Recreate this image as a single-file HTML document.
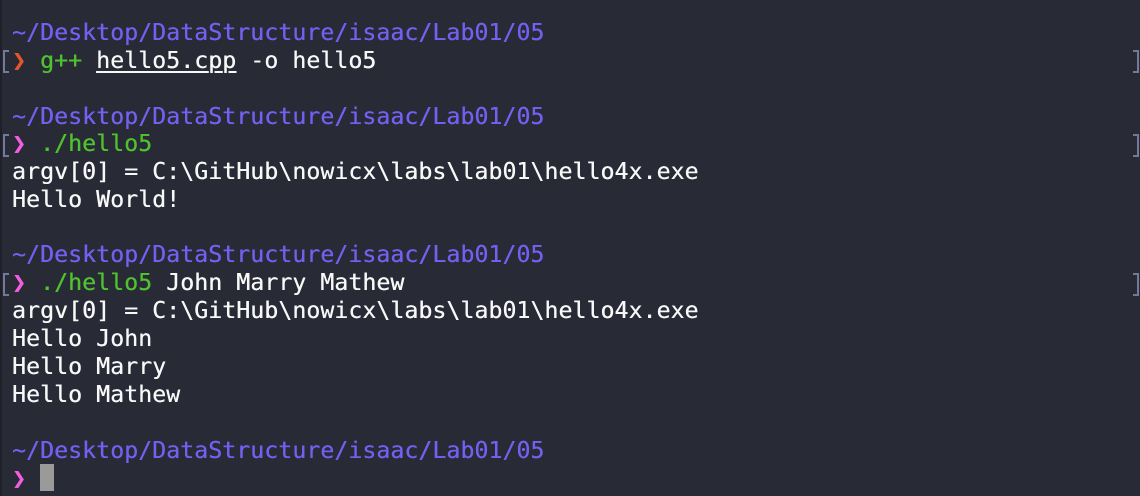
<!DOCTYPE html>
<html><head><meta charset="utf-8"><style>
html,body{margin:0;padding:0}
body{width:1140px;height:496px;background:#282a36;position:relative;overflow:hidden;font-family:"DejaVu Sans Mono","Liberation Mono",monospace;font-size:23.2px;letter-spacing:0.05px;color:#f8f8f8}
.l{position:absolute;left:12px;height:28px;line-height:28px;white-space:pre;text-shadow:0.3px 0 0 currentColor}
.p{color:#7360f0}
.g{color:#4fc22f}
.r{color:#e5562c}
.k{color:#f35ee0}
.u{text-decoration:underline;text-decoration-thickness:2px;text-underline-offset:3px}
.bl,.br{position:absolute;width:4px;height:19px;border:2px solid #717a9a}
.bl{left:3px;border-right:none}
.br{left:1133px;border-left:none}
.cur{position:absolute;left:40px;top:464px;width:14px;height:27px;background:#9a9a9a}
.edge{position:absolute;left:0;top:0;width:2px;height:496px;background:#1f2029}
</style></head><body>
<div class="edge"></div>
<div class="l p" style="top:19px">~/Desktop/DataStructure/isaac/Lab01/05</div>
<div class="l" style="top:47px"><span class="r">❯</span> <span class="g">g++</span> <span class="u">hello5.cpp</span> -o hello5</div>
<div class="bl" style="top:50px"></div><div class="br" style="top:50px"></div>
<div class="l p" style="top:103px">~/Desktop/DataStructure/isaac/Lab01/05</div>
<div class="l" style="top:130px"><span class="k">❯</span> <span class="g">./hello5</span></div>
<div class="bl" style="top:134px"></div><div class="br" style="top:134px"></div>
<div class="l" style="top:158px">argv[0] = C:\GitHub\nowicx\labs\lab01\hello4x.exe</div>
<div class="l" style="top:186px">Hello World!</div>
<div class="l p" style="top:241px">~/Desktop/DataStructure/isaac/Lab01/05</div>
<div class="l" style="top:269px"><span class="k">❯</span> <span class="g">./hello5</span> John Marry Mathew</div>
<div class="bl" style="top:273px"></div><div class="br" style="top:273px"></div>
<div class="l" style="top:297px">argv[0] = C:\GitHub\nowicx\labs\lab01\hello4x.exe</div>
<div class="l" style="top:325px">Hello John</div>
<div class="l" style="top:353px">Hello Marry</div>
<div class="l" style="top:381px">Hello Mathew</div>
<div class="l p" style="top:437px">~/Desktop/DataStructure/isaac/Lab01/05</div>
<div class="l" style="top:465px"><span class="k">❯</span></div>
<div class="cur"></div>
</body></html>
